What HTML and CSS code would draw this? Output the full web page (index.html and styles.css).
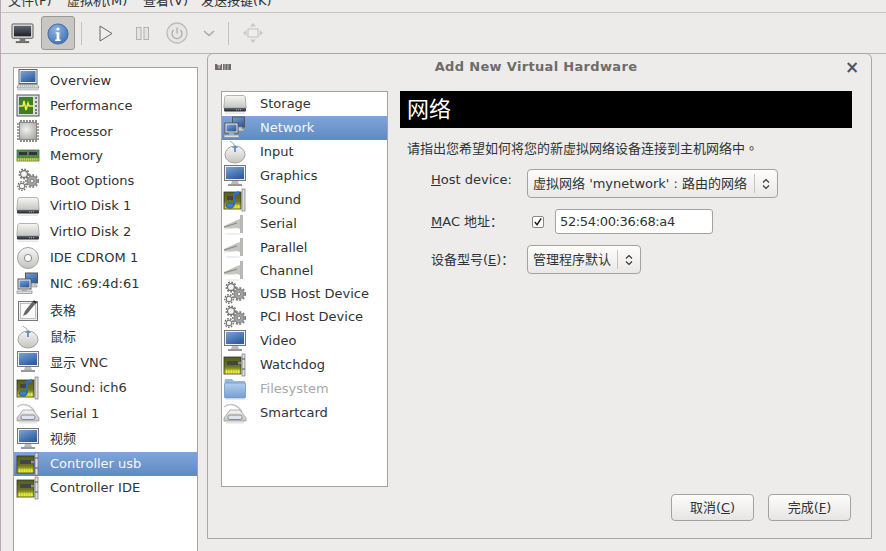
FILE: index.html
```html
<!DOCTYPE html>
<html lang="zh">
<head>
<meta charset="utf-8">
<title>Add New Virtual Hardware</title>
<link rel="stylesheet" href="styles.css">
</head>
<body>
<svg class="defs" width="0" height="0" aria-hidden="true">
  <defs>
    <linearGradient id="scr" x1="0" y1="0" x2="0.6" y2="1"><stop offset="0" stop-color="#79a3d8"/><stop offset="1" stop-color="#2f5f9f"/></linearGradient>
    <linearGradient id="silver" x1="0" y1="0" x2="0" y2="1"><stop offset="0" stop-color="#f6f6f4"/><stop offset="1" stop-color="#c4c4c0"/></linearGradient>
    <linearGradient id="dk" x1="0" y1="0" x2="0" y2="1"><stop offset="0" stop-color="#5c6670"/><stop offset="1" stop-color="#1f2226"/></linearGradient>
    <linearGradient id="pcb" x1="0" y1="0" x2="0" y2="1"><stop offset="0" stop-color="#55601a"/><stop offset="0.55" stop-color="#6a7420"/><stop offset="1" stop-color="#d8de2c"/></linearGradient>
    <radialGradient id="info" cx="0.4" cy="0.3" r="0.8"><stop offset="0" stop-color="#8db4e6"/><stop offset="1" stop-color="#3a6db0"/></radialGradient>
    <radialGradient id="chipg" cx="0.4" cy="0.4" r="0.7"><stop offset="0" stop-color="#f2f2f0"/><stop offset="1" stop-color="#a8a8a4"/></radialGradient>
    <linearGradient id="fold" x1="0" y1="0" x2="0" y2="1"><stop offset="0" stop-color="#a3c4ea"/><stop offset="1" stop-color="#5188c8"/></linearGradient>

    <symbol id="i-monitor" viewBox="0 0 24 24">
      <rect x="1.500" y="1.500" width="21" height="15" fill="#eee" stroke="#777"/>
      <rect x="3" y="3" width="18" height="12" fill="url(#scr)"/>
      <path d="M9 17h6l1 3H8z" fill="#bbb"/>
      <rect x="5" y="20" width="14" height="2" fill="#999"/>
    </symbol>
    <symbol id="i-laptop" viewBox="0 0 24 24">
      <rect x="3" y="1.500" width="18" height="14" fill="#eee" stroke="#666"/>
      <rect x="4.500" y="3" width="15" height="11" fill="url(#scr)"/>
      <path d="M2.500 16.500h19l1.500 3.500H1z" fill="#ddd" stroke="#888" stroke-width=".8"/>
      <path d="M4 18h16" stroke="#999" stroke-dasharray="1 1"/>
      <rect x="1" y="21" width="22" height="1.500" fill="#ccc"/>
    </symbol>
    <symbol id="i-perf" viewBox="0 0 24 24">
      <rect x="1" y="1" width="22" height="21" fill="#ddd" stroke="#555"/>
      <rect x="3" y="3" width="14" height="17" fill="#3c7f24"/>
      <path d="M3 12h4l1-5 2 9 2-7 1 3h4" fill="none" stroke="#f0f04a" stroke-width="1.500"/>
      <path d="M19 4h2M19 8h2M19 12h2M19 16h2M19 19h2" stroke="#555" stroke-width="1.500"/>
    </symbol>
    <symbol id="i-chip" viewBox="0 0 24 24">
      <rect x="3.500" y="3.500" width="17" height="17" fill="url(#chipg)" stroke="#777" stroke-width=".8"/>
      <path d="M5 3V1M8 3V1M11 3V1M14 3V1M17 3V1M20 3V1M5 23v-2M8 23v-2M11 23v-2M14 23v-2M17 23v-2M20 23v-2M3 5H1M3 8H1M3 11H1M3 14H1M3 17H1M3 20H1M23 5h-2M23 8h-2M23 11h-2M23 14h-2M23 17h-2M23 20h-2" stroke="#444" stroke-width="1.200"/>
    </symbol>
    <symbol id="i-ram" viewBox="0 0 24 24">
      <rect x="1" y="6" width="22" height="11" fill="#4f8a48" stroke="#5a6a50" stroke-width=".8"/>
      <rect x="3" y="8" width="8" height="3" fill="#333"/><rect x="13" y="8" width="8" height="3" fill="#333"/>
      <path d="M1.500 15.500h21" stroke="#e6d84a" stroke-width="2.400" stroke-dasharray="1.400 .6"/>
    </symbol>
    <symbol id="i-gears" viewBox="0 0 24 24">
      <g fill="none" stroke="#6a6a68">
        <circle cx="8" cy="6" r="3.400" stroke-width="1.100" fill="#f4f4f2"/>
        <circle cx="8" cy="6" r="4.800" stroke-width="1.500" stroke-dasharray="1.700 1.500"/>
        <circle cx="6" cy="18" r="2.800" stroke-width="1" fill="#f4f4f2"/>
        <circle cx="6" cy="18" r="4.200" stroke-width="1.400" stroke-dasharray="1.600 1.300"/>
        <circle cx="16" cy="13" r="5" stroke-width=".8" fill="#a2a2a0"/>
        <circle cx="16" cy="13" r="6.200" stroke-width="1.700" stroke-dasharray="2 1.600" stroke="#7c7c7a"/>
        <circle cx="16" cy="13" r="1.800" fill="#f0f0ee" stroke-width=".7"/>
      </g>
    </symbol>
    <symbol id="i-disk" viewBox="0 0 24 24">
      <path d="M4 3.500h16c1.500 0 2 .7 2.300 2l.9 10.500H.8L1.700 5.500C2 4.200 2.500 3.500 4 3.500z" fill="url(#silver)" stroke="#a2a2a0" stroke-width=".8"/>
      <path d="M1 16h22v2.500a1 1 0 0 1-1 1H2a1 1 0 0 1-1-1z" fill="url(#dk)"/>
      <path d="M13 17.800h6" stroke="#bbb" stroke-dasharray="1 1"/>
      <rect x="2" y="20.500" width="20" height="1.500" fill="#e6e6e6"/>
    </symbol>
    <symbol id="i-cd" viewBox="0 0 24 24">
      <circle cx="12" cy="12" r="10.500" fill="url(#silver)" stroke="#a2a2a0"/>
      <circle cx="12" cy="12" r="3.600" fill="#fff" stroke="#888"/>
    </symbol>
    <symbol id="i-nic" viewBox="0 0 24 24">
      <rect x="9.500" y="1" width="12" height="10" fill="url(#scr)" stroke="#555"/>
      <path d="M13 11h6v2h2v2h-5" fill="#ccc" stroke="#888" stroke-width=".6"/>
      <rect x="2" y="7" width="13" height="10" fill="#eee" stroke="#555"/>
      <rect x="3.500" y="8.500" width="10" height="7" fill="url(#scr)"/>
      <rect x="1" y="19" width="15" height="2.500" fill="#ddd" stroke="#888" stroke-width=".7"/>
      <rect x="6" y="17" width="5" height="2" fill="#aaa"/>
    </symbol>
    <symbol id="i-tablet" viewBox="0 0 24 24">
      <rect x="2.500" y="3.500" width="19" height="19" fill="#eee" stroke="#777"/>
      <rect x="4.500" y="5.500" width="15" height="15" fill="#fafafa" stroke="#aaa" stroke-width=".7"/>
      <path d="M7 18l2-5 8-10 3 2-9 11z" fill="#666"/>
      <path d="M17.500 3l3 2" stroke="#222" stroke-width="1.600"/>
    </symbol>
    <symbol id="i-mouse" viewBox="0 0 24 24">
      <path d="M11 5c0-2-2-2-4-4" fill="none" stroke="#999"/>
      <ellipse cx="12" cy="14.500" rx="10" ry="8.500" fill="url(#silver)" stroke="#a2a2a0"/>
      <path d="M12 6v6" stroke="#5c8fd0" stroke-width="1.800"/>
      <path d="M9 8l3-3 3 3" fill="#5c8fd0"/>
    </symbol>
    <symbol id="i-card" viewBox="0 0 24 24">
      <rect x="1" y="4" width="17" height="17" fill="url(#pcb)" stroke="#333" stroke-width=".8"/>
      <path d="M3 18.500h14" stroke="#eef03a" stroke-width="3.500" stroke-dasharray="1 .7"/>
      <rect x="4" y="8" width="11" height="4" fill="#444"/>
      <rect x="15" y="9" width="3" height="2" fill="#88a"/>
      <rect x="19" y="1" width="3" height="22" fill="#ddd" stroke="#777" stroke-width=".7"/>
      <path d="M19 6h3M19 16h3" stroke="#555"/>
    </symbol>
    <symbol id="i-sound" viewBox="0 0 24 24">
      <rect x="1" y="4" width="17" height="17" fill="url(#pcb)" stroke="#333" stroke-width=".8"/>
      <path d="M10 18.500h7" stroke="#eef03a" stroke-width="3.500" stroke-dasharray="1 .7"/>
      <rect x="4" y="8" width="8" height="4" fill="#444"/>
      <rect x="19" y="1" width="3" height="22" fill="#ddd" stroke="#777" stroke-width=".7"/>
      <path d="M10 17V5l6-2v3l-4 1.500V17" fill="#2f6fc0"/>
      <ellipse cx="7" cy="17.500" rx="4" ry="2.800" fill="#3f7ccc" stroke="#1e4a8a" stroke-width=".6"/>
    </symbol>
    <symbol id="i-serial" viewBox="0 0 24 24">
      <path d="M1 6c6-5 14-2 18 5" fill="none" stroke="#c4c4c0" stroke-width="1.400"/>
      <path d="M7 9h10l6 8v3H1v-3z" fill="url(#silver)" stroke="#999" stroke-width=".8"/>
      <rect x="5" y="14" width="14" height="4.500" rx="1.800" fill="#dde4ee" stroke="#667" stroke-width=".7"/>
      <rect x="3" y="21" width="18" height="1.500" fill="#e4e4e4"/>
    </symbol>
    <symbol id="i-plug" viewBox="0 0 24 24">
      <path d="M1 14l13-6 3-1v10l-3-1H1z" fill="#c4c4c0"/>
      <path d="M1 15l13-4" stroke="#8a8a86" stroke-width="1.200"/>
      <path d="M1 17l12-1" stroke="#dcdcd8" stroke-width="1.200"/>
      <rect x="17" y="3" width="3" height="18" fill="#b8b8b4"/>
      <ellipse cx="10" cy="22" rx="8" ry="1" fill="#eee"/>
    </symbol>
    <symbol id="i-folder" viewBox="0 0 24 24">
      <path d="M2 6V3.500a1 1 0 0 1 1-1h6l2 2h10a1 1 0 0 1 1 1V7z" fill="#7fa8d8" stroke="#6a8fb8" stroke-width=".7"/>
      <rect x="1.500" y="6" width="21" height="15" rx="1" fill="url(#fold)" stroke="#4f7fb4" stroke-width=".8"/>
      <rect x="2" y="22" width="20" height="1" fill="#e8e8e8"/>
    </symbol>
  </defs>
</svg>

<div class="app">
  <div class="menubar">
    <span class="menu m1">文件(F)</span>
    <span class="menu m2">虚拟机(M)</span>
    <span class="menu m3">查看(V)</span>
    <span class="menu">发送按键(K)</span>
  </div>

  <div class="toolbar">
    <button class="tool t-console">
      <svg class="ticon tv" viewBox="0 0 24 22">
        <rect x="1" y="1" width="22" height="15" rx="1" fill="#e2e2df" stroke="#555"/>
        <rect x="3" y="3" width="18" height="11" fill="url(#dk)"/>
        <path d="M9 16h6v3H9z" fill="#777"/>
        <rect x="5" y="19" width="14" height="2" fill="#666"/>
      </svg>
    </button>
    <button class="tool t-info">
      <svg class="ticon inf" viewBox="0 0 24 24">
        <circle cx="12" cy="12" r="11" fill="url(#info)" stroke="#3a679f"/>
        <circle cx="12" cy="6.500" r="1.700" fill="#fff"/>
        <path d="M9.500 10h4v8h1.500v1.500H9V18h1.500v-6.500h-1z" fill="#fff"/>
      </svg>
    </button>
    <span class="tsep s1"></span>
    <svg class="play" viewBox="0 0 14 17"><path d="M1 1l12 7.500L1 16z" fill="#eee" stroke="#666"/></svg>
    <svg class="pause" viewBox="0 0 13 13"><rect x=".5" y=".5" width="4.500" height="12" fill="#e4e4e2" stroke="#b2b2ae"/><rect x="8" y=".5" width="4.500" height="12" fill="#e4e4e2" stroke="#b2b2ae"/></svg>
    <svg class="power" viewBox="0 0 22 22"><circle cx="11" cy="11" r="10" fill="#e6e6e4" stroke="#bdbdb9" stroke-width="1.300"/><path d="M7.500 8a5 5 0 1 0 7 0M11 5.500v6" fill="none" stroke="#aaa" stroke-width="1.200"/></svg>
    <svg class="chev" viewBox="0 0 12 7"><path d="M1 1l5 4.500L11 1" fill="none" stroke="#aaa" stroke-width="1.500"/></svg>
    <span class="tsep s2"></span>
    <svg class="move" viewBox="0 0 22 22"><rect x="6" y="7" width="10" height="8" fill="#eee" stroke="#c2c2be"/><path d="M11 1l3 3.500H8zM11 21l3-3.500H8zM1 11l3.500-3v6zM21 11l-3.500-3v6z" fill="#c8c8c4"/></svg>
  </div>

  <div class="content">
    <ul class="list hwlist">
      <li class="row r25"><svg class="ic"><use href="#i-laptop"/></svg>Overview</li>
      <li class="row r26"><svg class="ic"><use href="#i-perf"/></svg>Performance</li>
      <li class="row r25"><svg class="ic"><use href="#i-chip"/></svg>Processor</li>
      <li class="row r24"><svg class="ic"><use href="#i-ram"/></svg>Memory</li>
      <li class="row r25"><svg class="ic"><use href="#i-gears"/></svg>Boot Options</li>
      <li class="row r26"><svg class="ic"><use href="#i-disk"/></svg>VirtIO Disk 1</li>
      <li class="row r26"><svg class="ic"><use href="#i-disk"/></svg>VirtIO Disk 2</li>
      <li class="row r26"><svg class="ic"><use href="#i-cd"/></svg>IDE CDROM 1</li>
      <li class="row r26"><svg class="ic"><use href="#i-nic"/></svg>NIC :69:4d:61</li>
      <li class="row r27"><svg class="ic"><use href="#i-tablet"/></svg>表格</li>
      <li class="row r26"><svg class="ic"><use href="#i-mouse"/></svg>鼠标</li>
      <li class="row r25"><svg class="ic"><use href="#i-monitor"/></svg>显示 VNC</li>
      <li class="row r26"><svg class="ic"><use href="#i-sound"/></svg>Sound: ich6</li>
      <li class="row r25"><svg class="ic"><use href="#i-serial"/></svg>Serial 1</li>
      <li class="row r26"><svg class="ic"><use href="#i-monitor"/></svg>视频</li>
      <li class="row r24 selected"><svg class="ic"><use href="#i-card"/></svg>Controller usb</li>
      <li class="row r24"><svg class="ic"><use href="#i-card"/></svg>Controller IDE</li>
    </ul>
  </div>

  <section class="dialog">
    <header class="dlg-title">
      <svg class="vm" viewBox="0 0 16 8"><path d="M0 1h2l2 5 2-5h1v6H0zM8 1h8v6H8z" fill="#6f6a6c"/><path d="M10 1v6M13 1v6" stroke="#ccc" stroke-width=".8"/><path d="M2 3h3" stroke="#a33" stroke-width="1"/></svg>
      <span class="dlg-name">Add New Virtual Hardware</span>
      <span class="dlg-close">×</span>
    </header>
    <div class="dlg-body">
      <ul class="list addlist">
        <li class="row r24"><svg class="ic"><use href="#i-disk"/></svg>Storage</li>
        <li class="row r24 selected"><svg class="ic"><use href="#i-nic"/></svg>Network</li>
        <li class="row r24"><svg class="ic"><use href="#i-mouse"/></svg>Input</li>
        <li class="row r24"><svg class="ic"><use href="#i-monitor"/></svg>Graphics</li>
        <li class="row r24"><svg class="ic"><use href="#i-sound"/></svg>Sound</li>
        <li class="row r24"><svg class="ic"><use href="#i-plug"/></svg>Serial</li>
        <li class="row r23"><svg class="ic"><use href="#i-plug"/></svg>Parallel</li>
        <li class="row r23"><svg class="ic"><use href="#i-plug"/></svg>Channel</li>
        <li class="row r23"><svg class="ic"><use href="#i-gears"/></svg>USB Host Device</li>
        <li class="row r24"><svg class="ic"><use href="#i-gears"/></svg>PCI Host Device</li>
        <li class="row r24"><svg class="ic"><use href="#i-monitor"/></svg>Video</li>
        <li class="row r24"><svg class="ic"><use href="#i-card"/></svg>Watchdog</li>
        <li class="row r24 disabled"><svg class="ic"><use href="#i-folder"/></svg>Filesystem</li>
        <li class="row r24"><svg class="ic"><use href="#i-serial"/></svg>Smartcard</li>
      </ul>
      <div class="pane">
        <h1 class="banner">网络</h1>
        <p class="desc">请指出您希望如何将您的新虚拟网络设备连接到主机网络中<span class="tc" lang="zh-Hant">。</span></p>
        <div class="form">
          <label class="lbl l-host"><u>H</u>ost device:</label>
          <div class="combo c-host"><span class="combo-text">虚拟网络 'mynetwork' : 路由的网络</span><span class="combo-sep"></span><svg class="updown" viewBox="0 0 8 12"><path d="M1 4.500L4 1.500l3 3M1 7.500l3 3 3-3" fill="none" stroke="#333" stroke-width="1.100"/></svg></div>
          <label class="lbl l-mac"><u>M</u>AC 地址：</label>
          <div class="mac">
            <span class="check"><svg viewBox="0 0 11 11"><path d="M2 5.500l2.500 3L9 1.500" fill="none" stroke="#222" stroke-width="1.600"/></svg></span>
            <span class="entry">52:54:00:36:68:a4</span>
          </div>
          <label class="lbl l-model">设备型号(<u>E</u>)：</label>
          <div class="combo c-model"><span class="combo-text">管理程序默认</span><span class="combo-sep"></span><svg class="updown" viewBox="0 0 8 12"><path d="M1 4.500L4 1.500l3 3M1 7.500l3 3 3-3" fill="none" stroke="#333" stroke-width="1.100"/></svg></div>
        </div>
      </div>
    </div>
    <footer class="dlg-actions">
      <button class="btn">取消(<u>C</u>)</button>
      <button class="btn">完成(<u>F</u>)</button>
    </footer>
  </section>
</div>
</body>
</html>
```

FILE: styles.css
```css
* { box-sizing: border-box; }
html, body { margin: 0; padding: 0; height: 551px; overflow: hidden; }
body {
  background: #edecea;
  font-family: "DejaVu Sans", "Noto Sans CJK SC", sans-serif;
  font-size: 13px;
  color: #2e3436;
}
.defs { position: absolute; }
.app {
  position: relative;
  width: 886px;
  height: 551px;
  display: flex;
  flex-direction: column;
  border-left: 1px solid #b9a9bb;
}
.menubar {
  height: 13px;
  flex: none;
  display: flex;
  align-items: flex-end;
  padding: 0 0 3px 7px;
  overflow: hidden;
  background: #edecea;
  border-bottom: 1px solid #c6c5c2;
  font-size: 13px;
  line-height: 17px;
}
.menu { white-space: nowrap; }
.m1 { width: 59px; }
.m2 { width: 76px; }
.m3 { width: 58px; }
.toolbar {
  height: 41px;
  flex: none;
  display: flex;
  align-items: center;
  padding-left: 9px;
  background: #ecebe9;
  border-bottom: 1px solid #b8b7b4;
}
.tool {
  padding: 0;
  border: 0;
  background: none;
  display: flex;
  align-items: center;
  justify-content: center;
}
.t-console { width: 24px; height: 34px; }
.t-info {
  width: 34px;
  height: 34px;
  margin-left: 7px;
  background: #c9c7c3;
  border: 1px solid #9b9995;
  border-radius: 3px;
}
.ticon.tv { width: 23px; height: 21px; }
.ticon.inf { width: 22px; height: 22px; margin-top: 2px; }
.tsep { width: 1px; height: 23px; background: #c4c3c0; }
.s1 { margin-left: 6px; }
.play { width: 14px; height: 17px; margin-left: 17px; }
.pause { width: 13px; height: 13px; margin-left: 23px; }
.power { width: 22px; height: 22px; margin-left: 17px; }
.chev { width: 12px; height: 7px; margin-left: 15px; }
.s2 { margin-left: 13px; }
.move { width: 22px; height: 22px; margin-left: 13px; }

.content {
  flex: 1;
  min-height: 0;
  padding: 13px 0 0 12px;
}
.list {
  list-style: none;
  margin: 0;
  padding: 0;
  background: #fff;
  border: 1px solid #a3a3a0;
}
.hwlist { width: 185px; height: 500px; }
.addlist { width: 167px; height: 396px; flex: none; }
.row {
  display: flex;
  align-items: center;
  white-space: nowrap;
  line-height: 17px;
  padding-bottom: 1px;
}
.r23 { height: 23px; }
.r24 { height: 24px; }
.r25 { height: 25px; }
.r26 { height: 26px; }
.r27 { height: 27px; }
.ic { width: 24px; height: 24px; flex: none; margin: 0 13px 0 1px; }
.hwlist .ic { margin: 0 10px 0 2px; }
.selected {
  background: linear-gradient(#7fa5d8, #5f8bc2);
  color: #f4f7fc;
}
.disabled { color: #a8a8a6; }
.disabled .ic { opacity: .8; }

.dialog {
  position: absolute;
  left: 206px;
  top: 53px;
  width: 665px;
  height: 486px;
  display: flex;
  flex-direction: column;
  background: #edecea;
  border: 1px solid #a9a8a5;
  border-radius: 6px 6px 0 0;
}
.dlg-title {
  height: 37px;
  flex: none;
  display: flex;
  align-items: center;
  padding: 0 13px 12px 7px;
}
.vm { width: 16px; height: 8px; flex: none; }
.dlg-name {
  flex: 1;
  text-align: center;
  font-size: 13px;
  font-weight: bold;
  letter-spacing: .33px;
  color: #6c6c6a;
  padding-right: 4px;
}
.dlg-close { font-size: 17px; font-weight: bold; line-height: 16px; color: #555; width: 13px; text-align: center; }
.dlg-body {
  flex: 1;
  min-height: 0;
  display: flex;
  padding-left: 13px;
}
.pane { width: 452px; margin-left: 12px; }
.banner {
  margin: 0;
  height: 37px;
  background: #000;
  color: #fff;
  font-size: 22px;
  font-weight: normal;
  line-height: 37px;
  padding-left: 7px;
}
.desc {
  margin: 11px 0 0 7px;
  font-size: 13px;
  line-height: 18px;
  white-space: nowrap;
}
.tc { font-family: "Noto Sans CJK TC", sans-serif; }
.form {
  display: grid;
  grid-template-columns: 96px auto;
  grid-template-rows: 29px 25px 29px;
  row-gap: 11px;
  justify-content: start;
  justify-items: start;
  align-items: center;
  margin: 11px 0 0 31px;
}
.lbl { white-space: nowrap; line-height: 17px; font-size: 13px; }
.l-host { align-self: start; margin-top: 2px; }
.combo {
  height: 29px;
  display: flex;
  align-items: center;
  border: 1px solid #a3a29f;
  border-radius: 4px;
  background: linear-gradient(#fdfdfc, #e9e8e6);
  font-size: 13px;
  padding-left: 5px;
  white-space: nowrap;
}
.c-host { width: 251px; }
.c-model { width: 114px; }
.combo-text { flex: 1; padding-bottom: 2px; }
.combo-sep { width: 1px; height: 19px; background: #c6c5c2; }
.updown { width: 8px; height: 12px; margin: 0 7px 0 7px; }
.mac { display: flex; align-items: center; }
.check {
  width: 12px;
  height: 12px;
  margin-left: 5px;
  display: flex;
  border: 1px solid #8a8986;
  border-radius: 2px;
  background: #fff;
}
.check svg { width: 10px; height: 10px; }
.entry {
  width: 158px;
  height: 25px;
  margin-left: 11px;
  padding-left: 4px;
  background: #fff;
  border: 1px solid #a3a29f;
  border-radius: 3px;
  font-size: 13px;
  letter-spacing: -.35px;
  line-height: 23px;
}
.dlg-actions {
  height: 44px;
  flex: none;
  display: flex;
  justify-content: flex-end;
  gap: 14px;
  padding: 0 20px 16px 0;
}
.btn {
  width: 83px;
  height: 27px;
  padding: 0 0 2px;
  border: 1px solid #a3a29f;
  border-radius: 4px;
  background: linear-gradient(#fdfdfc, #e6e5e3);
  font-family: inherit;
  font-size: 13px;
  color: #2e3436;
}
```
